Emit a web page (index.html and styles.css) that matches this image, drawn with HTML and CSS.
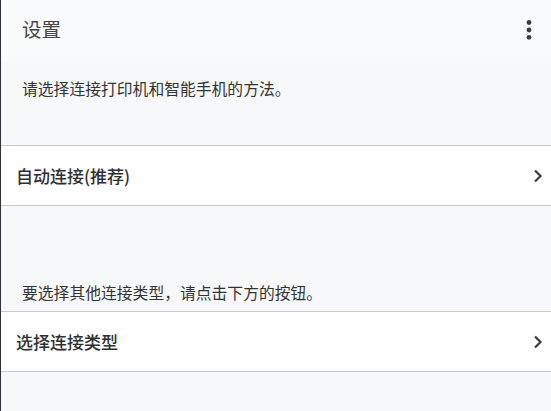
FILE: index.html
```html
<!DOCTYPE html>
<html lang="zh">
<head>
<meta charset="utf-8">
<link rel="stylesheet" href="styles.css">
</head>
<body>
<div class="page">
  <header class="appbar">
    <span class="title">设置</span>
    <svg class="kebab" width="8" height="22" viewBox="0 0 8 22"><circle cx="4" cy="3.5" r="2.4"/><circle cx="4" cy="11" r="2.4"/><circle cx="4" cy="18.3" r="2.4"/></svg>
  </header>
  <div class="desc desc-top">请选择连接打印机和智能手机的方法。</div>
  <div class="row">
    <span class="row-label">自动连接(推荐)</span>
    <svg class="chev" width="10" height="14" viewBox="0 0 10 14"><path d="M2 1.5 L7.5 7 L2 12.5" fill="none" stroke="#3a3d44" stroke-width="2.2"/></svg>
  </div>
  <div class="desc desc-mid">要选择其他连接类型，请点击下方的按钮。</div>
  <div class="row">
    <span class="row-label">选择连接类型</span>
    <svg class="chev" width="10" height="14" viewBox="0 0 10 14"><path d="M2 1.5 L7.5 7 L2 12.5" fill="none" stroke="#3a3d44" stroke-width="2.2"/></svg>
  </div>
</div>
</body>
</html>
```
FILE: styles.css
```css
html, body {
  margin: 0;
  padding: 0;
  height: 100%;
}
body {
  font-family: "Noto Sans CJK SC", "Noto Sans", sans-serif;
  background: #f7f8fa;
  color: #333;
}
.page {
  min-height: 411px;
  border-left: 1px solid #2e3038;
  background: #f7f8fa;
}
.appbar {
  height: 62px;
  box-sizing: border-box;
  padding: 0 18px 4px 21px;
  background: #f9fafc;
  display: flex;
  align-items: center;
  justify-content: space-between;
}
.title {
  font-size: 19.5px;
  color: #454545;
  line-height: 24px;
}
.kebab {
  fill: #3a3d44;
  margin-top: 1px;
}
.desc {
  font-size: 15.8px;
  line-height: 20px;
  color: #333;
  padding-left: 21px;
  box-sizing: border-box;
}
.desc-top {
  height: 83px;
  padding-top: 17px;
}
.desc-mid {
  height: 105px;
  display: flex;
  align-items: flex-end;
  padding-bottom: 8px;
}
.row {
  height: 61px;
  box-sizing: border-box;
  background: #fff;
  border-top: 1px solid #c8c9cc;
  border-bottom: 1px solid #c8c9cc;
  display: flex;
  align-items: center;
  justify-content: space-between;
  padding: 0 8px 0 15px;
}
.row-label {
  font-size: 17px;
  font-weight: 500;
  color: #2f2f2f;
}
.chev {
  display: block;
}
```
